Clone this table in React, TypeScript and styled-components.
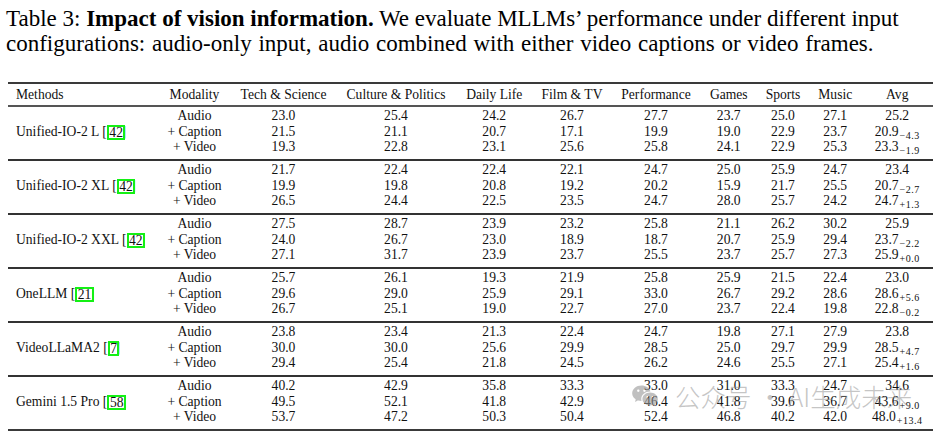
import React from "react";
import styled, { createGlobalStyle } from "styled-components";
import { RiWechatFill } from "react-icons/ri";

const Global = createGlobalStyle`
  html, body { margin: 0; padding: 0; background: #fff; }
  body { font-family: "Liberation Serif", "Times New Roman", serif; color: #111; }
`;

const Page = styled.div`
  position: relative;
  width: 944px;
  height: 439px;
  overflow: hidden;
`;

const Caption = styled.p`
  margin: 6px 0 0 6px;
  font-size: 23px;
  line-height: 25px;
  white-space: nowrap;
  color: #000;
`;

const CaptionLine = styled.span<{ $spread?: number }>`
  display: block;
  word-spacing: ${(p) => p.$spread ?? 0}px;
`;

const Bold = styled.b`
  font-weight: 700;
`;

const Table = styled.table`
  border-collapse: collapse;
  table-layout: fixed;
  width: 925px;
  margin: 26px 0 0 8px;
  font-size: 13.6px;
  line-height: 15.5px;
  border-top: 2px solid #3a3a3a;
  border-bottom: 2px solid #3a3a3a;
  color: #111;
`;

const Head = styled.thead`
  border-bottom: 2px solid #555;
`;

const Group = styled.tbody`
  & + & {
    border-top: 2px solid #333;
  }
`;

const Th = styled.th<{ $left?: boolean }>`
  height: 21px;
  padding: 0 0 0 ${(p) => (p.$left ? "8px" : "0")};
  font-weight: 400;
  text-align: ${(p) => (p.$left ? "left" : "center")};
  white-space: nowrap;
`;

const Td = styled.td<{ $pos: "first" | "mid" | "last" }>`
  padding: ${(p) => (p.$pos === "first" ? "1px" : "0")} 0
    ${(p) => (p.$pos === "last" ? "4.5px" : "0")} 0;
  text-align: center;
  white-space: nowrap;
`;

const MethodCell = styled.td`
  padding: 0 0 2px 8px;
  text-align: left;
  vertical-align: middle;
  white-space: nowrap;
`;

const CiteBox = styled.span`
  position: relative;
  z-index: 1;
  display: inline-block;
  border: 2px solid #14f014;
  line-height: 11px;
  padding: 0 0.5px;
  margin-right: -4px;
  vertical-align: -1px;
`;

const Delta = styled.span`
  font-size: 10px;
  letter-spacing: 0.5px;
  vertical-align: -3px;
  line-height: 0;
  margin-left: 1px;
`;

const Watermark = styled.div`
  position: absolute;
  left: 631px;
  top: 381px;
  display: flex;
  align-items: center;
  gap: 16px;
  pointer-events: none;
  color: rgba(150, 150, 150, 0.6);
`;

const WatermarkText = styled.span`
  font-family: "Noto Sans CJK SC", "Noto Sans", sans-serif;
  font-size: 25.5px;
  line-height: 30px;
  font-weight: 300;
  color: rgba(140, 140, 140, 0.5);
  white-space: nowrap;
`;

const colWidths = [150, 73, 105, 120, 76.5, 79, 89, 56.5, 52, 52.5, 71.5];
const headers = [
  "Methods",
  "Modality",
  "Tech & Science",
  "Culture & Politics",
  "Daily Life",
  "Film & TV",
  "Performance",
  "Games",
  "Sports",
  "Music",
  "Avg",
];

type Row = { mod: string; vals: string[]; avg: string; delta?: string };
type G = { name: string; cite: string; rows: Row[] };

const r = (mod: string, s: string, delta?: string): Row => {
  const parts = s.split(" ");
  return { mod, vals: parts.slice(0, 8), avg: parts[8], delta };
};

const groups: G[] = [
  {
    name: "Unified-IO-2 L",
    cite: "42",
    rows: [
      r("Audio", "23.0 25.4 24.2 26.7 27.7 23.7 25.0 27.1 25.2"),
      r("+ Caption", "21.5 21.1 20.7 17.1 19.9 19.0 22.9 23.7 20.9", "\u22124.3"),
      r("+ Video", "19.3 22.8 23.1 25.6 25.8 24.1 22.9 25.3 23.3", "\u22121.9"),
    ],
  },
  {
    name: "Unified-IO-2 XL",
    cite: "42",
    rows: [
      r("Audio", "21.7 22.4 22.4 22.1 24.7 25.0 25.9 24.7 23.4"),
      r("+ Caption", "19.9 19.8 20.8 19.2 20.2 15.9 21.7 25.5 20.7", "\u22122.7"),
      r("+ Video", "26.5 24.4 22.5 23.5 24.7 28.0 25.7 24.2 24.7", "+1.3"),
    ],
  },
  {
    name: "Unified-IO-2 XXL",
    cite: "42",
    rows: [
      r("Audio", "27.5 28.7 23.9 23.2 25.8 21.1 26.2 30.2 25.9"),
      r("+ Caption", "24.0 26.7 23.0 18.9 18.7 20.7 25.9 29.4 23.7", "\u22122.2"),
      r("+ Video", "27.1 31.7 23.9 23.7 25.5 23.7 25.7 27.3 25.9", "+0.0"),
    ],
  },
  {
    name: "OneLLM",
    cite: "21",
    rows: [
      r("Audio", "25.7 26.1 19.3 21.9 25.8 25.9 21.5 22.4 23.0"),
      r("+ Caption", "29.6 29.0 25.9 29.1 33.0 26.7 29.2 28.6 28.6", "+5.6"),
      r("+ Video", "26.7 25.1 19.0 22.7 27.0 23.7 22.4 19.8 22.8", "\u22120.2"),
    ],
  },
  {
    name: "VideoLLaMA2",
    cite: "7",
    rows: [
      r("Audio", "23.8 23.4 21.3 22.4 24.7 19.8 27.1 27.9 23.8"),
      r("+ Caption", "30.0 30.0 25.6 29.9 28.5 25.0 29.7 29.9 28.5", "+4.7"),
      r("+ Video", "29.4 25.4 21.8 24.5 26.2 24.6 25.5 27.1 25.4", "+1.6"),
    ],
  },
  {
    name: "Gemini 1.5 Pro",
    cite: "58",
    rows: [
      r("Audio", "40.2 42.9 35.8 33.3 33.0 31.0 33.3 24.7 34.6"),
      r("+ Caption", "49.5 52.1 41.8 42.9 46.4 41.8 39.6 36.7 43.6", "+9.0"),
      r("+ Video", "53.7 47.2 50.3 50.4 52.4 46.8 40.2 42.0 48.0", "+13.4"),
    ],
  },
];

const posOf = (i: number): "first" | "mid" | "last" =>
  i === 0 ? "first" : i === 2 ? "last" : "mid";

export default function App() {
  return (
    <Page>
      <Global />
      <Caption>
        <CaptionLine>
          Table 3: <Bold>Impact of vision information.</Bold> We evaluate
          MLLMs’ performance under different input
        </CaptionLine>
        <CaptionLine $spread={1}>
          configurations: audio-only input, audio combined with either video
          captions or video frames.
        </CaptionLine>
      </Caption>
      <Table>
        <colgroup>
          {colWidths.map((w, i) => (
            <col key={i} style={{ width: w }} />
          ))}
        </colgroup>
        <Head>
          <tr>
            {headers.map((h, i) => (
              <Th key={h} $left={i === 0}>
                {h}
              </Th>
            ))}
          </tr>
        </Head>
        {groups.map((g) => (
          <Group key={g.name}>
            {g.rows.map((row, i) => (
              <tr key={row.mod}>
                {i === 0 && (
                  <MethodCell rowSpan={3}>
                    {g.name} [<CiteBox>{g.cite}</CiteBox>]
                  </MethodCell>
                )}
                <Td $pos={posOf(i)}>{row.mod}</Td>
                {row.vals.map((v, j) => (
                  <Td key={j} $pos={posOf(i)}>
                    {v}
                  </Td>
                ))}
                <Td $pos={posOf(i)}>
                  {row.avg}
                  {row.delta && <Delta>{row.delta}</Delta>}
                </Td>
              </tr>
            ))}
          </Group>
        ))}
      </Table>
      <Watermark>
        <RiWechatFill size={28} />
        <WatermarkText>公众号 · AI生成未来</WatermarkText>
      </Watermark>
    </Page>
  );
}
